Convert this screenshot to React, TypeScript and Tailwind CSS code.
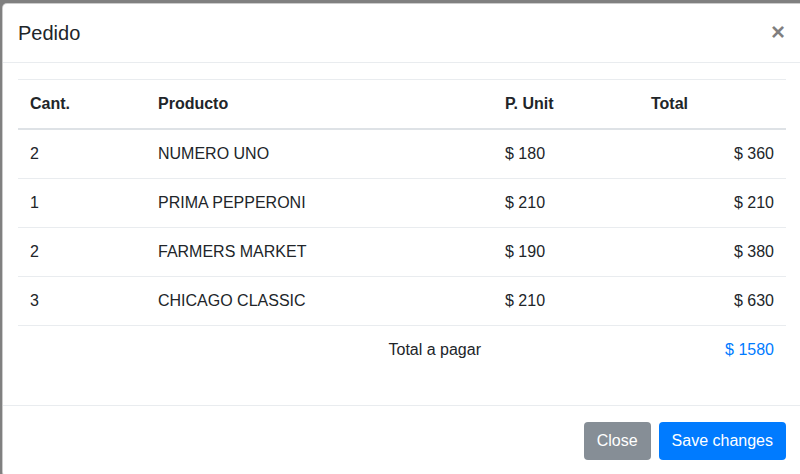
import React from 'react';

const rows = [
    { qty: 2, name: 'NUMERO UNO', unit: 180, total: 360 },
    { qty: 1, name: 'PRIMA PEPPERONI', unit: 210, total: 210 },
    { qty: 2, name: 'FARMERS MARKET', unit: 190, total: 380 },
    { qty: 3, name: 'CHICAGO CLASSIC', unit: 210, total: 630 },
];

export default function App() {
    return (
        <div className="w-[800px] h-[474px] overflow-hidden bg-[#808080] font-['Liberation_Sans',Arial,sans-serif] text-[#212529]">
            {/* Modal */}
            <div className="ml-[2px] mt-[3px] w-[810px] rounded-[5px] border border-black/20 bg-white">
                {/* Header */}
                <div className="flex h-[59px] items-center justify-between border-b border-[#e9ecef] pl-[15px] pr-[25px]">
                    <h5 className="text-[20px] leading-[30px]">Pedido</h5>
                    <button className="mr-[1px] mt-[-3px] text-[24px] font-bold leading-none text-black/50">×</button>
                </div>

                {/* Body */}
                <div className="pl-[15px] pr-[25px] pt-4 pb-4">
                    <table className="mb-[15px] w-full border-collapse text-[16px] leading-6">
                        <thead>
                            <tr>
                                <th className="w-[128px] border-t border-b-2 border-t-[#e9ecef] border-b-[#dee2e6] px-3 py-3 text-left font-bold">Cant.</th>
                                <th className="w-[347px] border-t border-b-2 border-t-[#e9ecef] border-b-[#dee2e6] px-3 py-3 text-left font-bold">Producto</th>
                                <th className="w-[146px] border-t border-b-2 border-t-[#e9ecef] border-b-[#dee2e6] px-3 py-3 text-left font-bold">P. Unit</th>
                                <th className="border-t border-b-2 border-t-[#e9ecef] border-b-[#dee2e6] px-3 py-3 text-left font-bold">Total</th>
                            </tr>
                        </thead>
                        <tbody>
                            {rows.map((r, i) => (
                                <tr key={i}>
                                    <td className="border-t border-[#e9ecef] px-3 py-3">{r.qty}</td>
                                    <td className="border-t border-[#e9ecef] px-3 py-3">{r.name}</td>
                                    <td className="border-t border-[#e9ecef] px-3 py-3">$ {r.unit}</td>
                                    <td className="border-t border-[#e9ecef] px-3 py-3 text-right">$ {r.total}</td>
                                </tr>
                            ))}
                            <tr>
                                <td className="border-t border-[#e9ecef] px-3 py-3"></td>
                                <td className="border-t border-[#e9ecef] px-3 py-3 text-right">Total a pagar</td>
                                <td className="border-t border-[#e9ecef] px-3 py-3"></td>
                                <td className="border-t border-[#e9ecef] px-3 py-3 text-right text-[#007bff]">$ 1580</td>
                            </tr>
                        </tbody>
                    </table>
                </div>

                {/* Footer */}
                <div className="flex justify-end gap-2 border-t border-[#e9ecef] pl-4 pr-[25px] pt-4 pb-4">
                    <button className="rounded-[4px] bg-[#868e96] px-[13px] py-[7px] text-[16px] leading-6 text-white">Close</button>
                    <button className="rounded-[4px] bg-[#007bff] px-[13px] py-[7px] text-[16px] leading-6 text-white">Save changes</button>
                </div>
            </div>
        </div>
    );
}
